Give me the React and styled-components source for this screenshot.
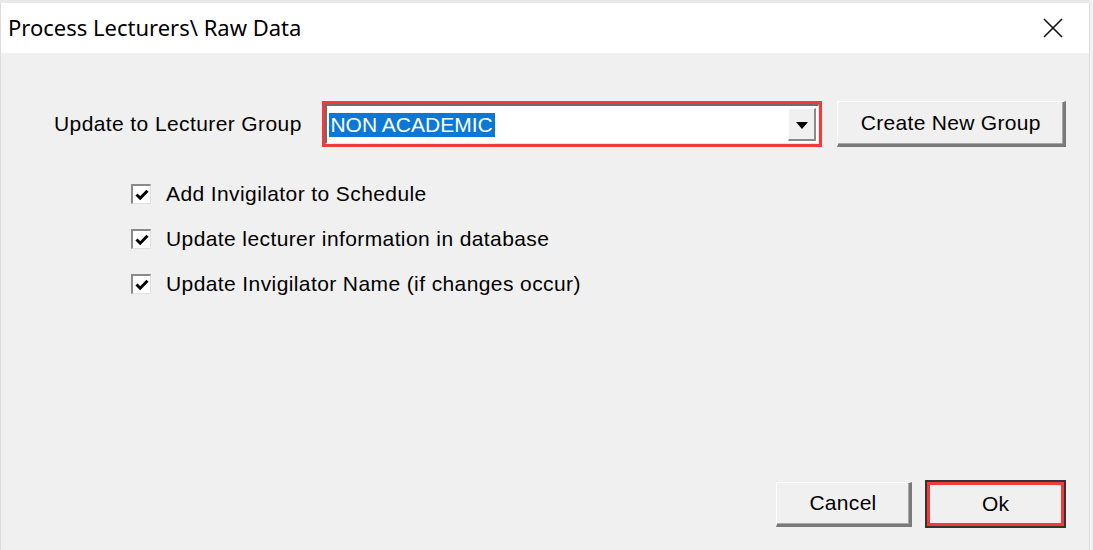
import React from 'react'
import styled, { createGlobalStyle } from 'styled-components'

const GlobalStyle = createGlobalStyle`
  html, body {
    margin: 0;
    padding: 0;
    background: #f3f3f3;
  }
`

const Page = styled.div`
  width: 1093px;
  height: 550px;
  display: flex;
  flex-direction: column;
  overflow: hidden;
  background: #f3f3f3;
`

const BehindStrip = styled.div`
  height: 3px;
  background: #e9e9e9;
  width: 1090px;
`

const Window = styled.div`
  flex: 1;
  width: 1088px;
  display: flex;
  flex-direction: column;
  border-left: 1px solid #dcdcdc;
  border-right: 1px solid #dcdcdc;
  background: #f0f0f0;
`

const TitleBar = styled.div`
  height: 50px;
  background: #ffffff;
  display: flex;
  align-items: center;
  justify-content: space-between;
  padding: 0 26px 0 7px;
`

const Title = styled.span`
  font-family: 'Noto Sans', 'Open Sans', sans-serif;
  font-size: 22px;
  color: #000;
  margin-top: -2px;
`

const CloseIcon = () => (
  <svg width="20" height="20" viewBox="0 0 20 20">
    <path d="M1 1 L19 19 M19 1 L1 19" stroke="#111" strokeWidth="1.6" fill="none" />
  </svg>
)

const Body = styled.div`
  flex: 1;
  display: flex;
  flex-direction: column;
  padding: 48px 23px 22px 53px;
  font-family: 'Liberation Sans', Arial, sans-serif;
  font-size: 21px;
  letter-spacing: 0.4px;
  color: #000;
`

const GroupRow = styled.div`
  display: flex;
  align-items: center;
`

const Label = styled.span`
  width: 269px;
`

const Highlight = styled.div`
  border: 3px solid #f23a3a;
  width: 495px;
  height: 40px;
  display: flex;
`

const Combo = styled.div`
  flex: 1;
  background: #fff;
  border-top: 2px solid #6d6d6d;
  border-left: 2px solid #6d6d6d;
  border-right: 1px solid #e6e6e6;
  border-bottom: 1px solid #e6e6e6;
  display: flex;
  align-items: center;
  padding: 0 2px 0 2px;
`

const Selected = styled.span`
  background: #0a78d7;
  color: #fff;
  padding: 0 2px 0 1px;
  line-height: 24px;
  letter-spacing: 0;
`

const DropButton = styled.div`
  margin-left: auto;
  width: 28px;
  height: 33px;
  background: #f0f0f0;
  border-top: 1px solid #ffffff;
  border-left: 1px solid #ffffff;
  border-right: 2px solid #8a8a8a;
  border-bottom: 2px solid #8a8a8a;
  display: flex;
  align-items: center;
  justify-content: center;
  box-sizing: border-box;
`

const Triangle = styled.div`
  width: 0;
  height: 0;
  border-left: 6px solid transparent;
  border-right: 6px solid transparent;
  border-top: 7px solid #000;
  margin-top: 3px;
`

const Button = styled.button`
  font-family: 'Liberation Sans', Arial, sans-serif;
  font-size: 21px;
  letter-spacing: 0.3px;
  color: #000;
  background: #f0f0f0;
  width: ${p => p.$w}px;
  height: ${p => p.$h}px;
  margin-left: ${p => p.$ml || 0}px;
  border-top: 1px solid #ffffff;
  border-left: 1px solid #ffffff;
  border-right: 3px solid #7a7a7a;
  border-bottom: 3px solid #7a7a7a;
  box-shadow: inset -1px -1px 0 #a8a8a8;
  padding: 0;
  cursor: pointer;
`

const OkButton = styled.button`
  font-family: 'Liberation Sans', Arial, sans-serif;
  font-size: 21px;
  color: #000;
  background: #f0f0f0;
  width: 137px;
  height: 44px;
  border: 3px solid #f23a3a;
  outline: 2px solid #333;
  outline-offset: 0;
  margin: 2px 2px 2px 0;
  padding: 0;
`

const CheckList = styled.div`
  display: flex;
  flex-direction: column;
  gap: 21px;
  margin: 35px 0 0 77px;
`

const CheckRow = styled.label`
  display: flex;
  align-items: center;
  gap: 15px;
`

const Box = styled.span`
  width: 20px;
  height: 20px;
  box-sizing: border-box;
  background: #fff;
  border-top: 2px solid #8a8a8a;
  border-left: 2px solid #8a8a8a;
  border-right: 1px solid #e0e0e0;
  border-bottom: 1px solid #e0e0e0;
  display: flex;
  align-items: center;
  justify-content: center;
`

const Check = () => (
  <svg width="14" height="12" viewBox="0 0 14 12">
    <path d="M1.5 5.5 L5.2 9.2 L12.5 1.8" stroke="#000" strokeWidth="3" fill="none" />
  </svg>
)

const Footer = styled.div`
  margin-top: auto;
  display: flex;
  justify-content: flex-end;
  align-items: center;
  gap: 15px;
`

const options = [
  'Add Invigilator to Schedule',
  'Update lecturer information in database',
  'Update Invigilator Name (if changes occur)'
]

export default function App() {
  return (
    <Page>
      <GlobalStyle />
      <BehindStrip />
      <Window>
        <TitleBar>
          <Title>Process Lecturers\ Raw Data</Title>
          <CloseIcon />
        </TitleBar>
        <Body>
          <GroupRow>
            <Label>Update to Lecturer Group</Label>
            <Highlight>
              <Combo>
                <Selected>NON ACADEMIC</Selected>
                <DropButton>
                  <Triangle />
                </DropButton>
              </Combo>
            </Highlight>
            <Button $w={229} $h={46} $ml={15}>
              Create New Group
            </Button>
          </GroupRow>
          <CheckList>
            {options.map(text => (
              <CheckRow key={text}>
                <Box>
                  <Check />
                </Box>
                <span>{text}</span>
              </CheckRow>
            ))}
          </CheckList>
          <Footer>
            <Button $w={136} $h={45}>Cancel</Button>
            <OkButton>Ok</OkButton>
          </Footer>
        </Body>
      </Window>
    </Page>
  )
}
